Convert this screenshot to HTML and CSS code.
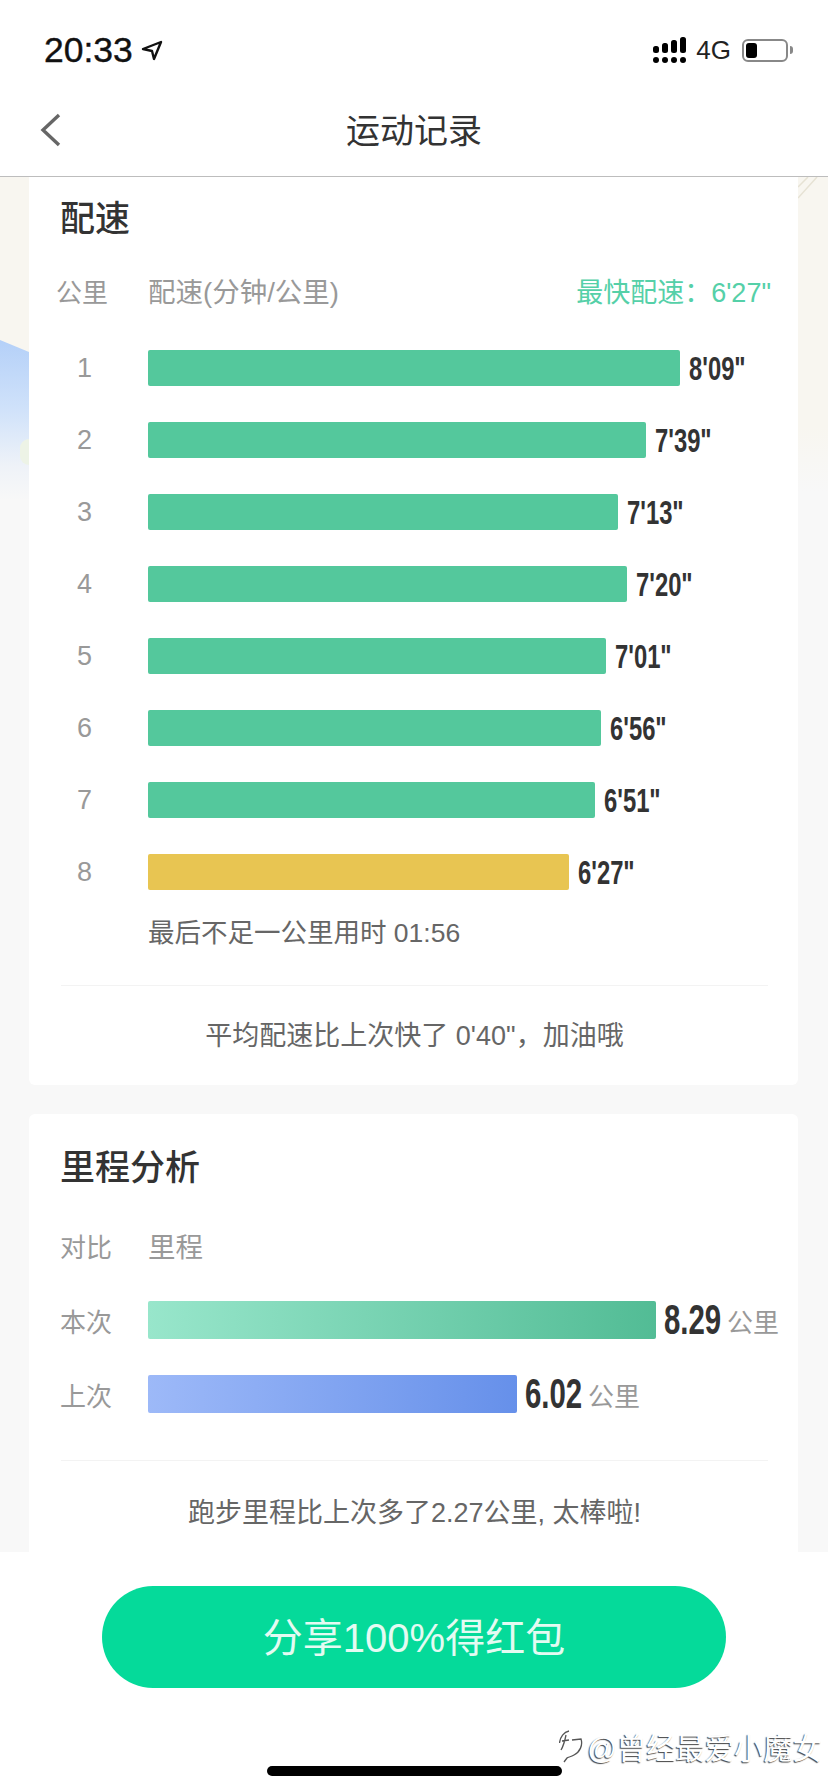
FILE: index.html
```html
<!DOCTYPE html>
<html lang="zh-CN">
<head>
    <meta charset="UTF-8">
    <meta name="viewport" content="width=device-width, initial-scale=1.0">
    <title>运动记录</title>
    <link rel="stylesheet" href="styles.css">
</head>
<body>

<div class="phone">
    <div class="status-bar">
        <div class="status-left">
            <span class="time">20:33</span>
            <svg class="locate" width="22" height="22" viewBox="0 0 22 22">
                <path d="M2 10 L20 3 L13 20 L11 12 Z" fill="none" stroke="#111" stroke-width="2.4" stroke-linejoin="round"/>
            </svg>
        </div>
        <div class="status-right">
            <svg class="signal" width="33" height="26" viewBox="0 0 33 26">
                <rect x="0" y="9" width="6" height="7" rx="2.5"/>
                <rect x="9" y="6" width="6" height="10" rx="2.5"/>
                <rect x="18" y="3" width="6" height="13" rx="2.5"/>
                <rect x="27" y="0" width="6" height="16" rx="2.5"/>
                <rect x="0" y="20" width="6" height="6" rx="3"/>
                <rect x="9" y="20" width="6" height="6" rx="3"/>
                <rect x="18" y="20" width="6" height="6" rx="3"/>
                <rect x="27" y="20" width="6" height="6" rx="3"/>
            </svg>
            <span class="network">4G</span>
            <div class="battery"><div class="battery-level"></div></div>
            <div class="battery-tip"></div>
        </div>
    </div>

    <div class="nav-bar">
        <svg class="back" width="22" height="34" viewBox="0 0 22 34">
            <path d="M19 2 L3 17 L19 32" fill="none" stroke="#666" stroke-width="3.4"/>
        </svg>
        <span class="nav-title">运动记录</span>
    </div>

    <div class="content">
        <!-- map artwork showing around the cards -->
        <div class="scene">
            <div class="scene-sky"></div>
            <div class="scene-hill"></div>
            <svg class="scene-lines" width="30" height="24" viewBox="0 0 30 24">
                <path d="M0 21 L19 0 M0 10 L10 0" stroke="#e6e2d4" stroke-width="1.5" fill="none"/>
            </svg>
        </div>

        <section class="card card-pace">
            <h2 class="card-title">配速</h2>
            <div class="table-head">
                <span class="col-label">公里</span>
                <span class="col-main">配速(分钟/公里)</span>
                <span class="fastest">最快配速：6'27"</span>
            </div>

            <div class="pace-row">
                <span class="km">1</span>
                <div class="bar" style="width: 532px"></div>
                <span class="pace">8'09"</span>
            </div>
            <div class="pace-row">
                <span class="km">2</span>
                <div class="bar" style="width: 498px"></div>
                <span class="pace">7'39"</span>
            </div>
            <div class="pace-row">
                <span class="km">3</span>
                <div class="bar" style="width: 470px"></div>
                <span class="pace">7'13"</span>
            </div>
            <div class="pace-row">
                <span class="km">4</span>
                <div class="bar" style="width: 479px"></div>
                <span class="pace">7'20"</span>
            </div>
            <div class="pace-row">
                <span class="km">5</span>
                <div class="bar" style="width: 458px"></div>
                <span class="pace">7'01"</span>
            </div>
            <div class="pace-row">
                <span class="km">6</span>
                <div class="bar" style="width: 453px"></div>
                <span class="pace">6'56"</span>
            </div>
            <div class="pace-row">
                <span class="km">7</span>
                <div class="bar" style="width: 447px"></div>
                <span class="pace">6'51"</span>
            </div>
            <div class="pace-row">
                <span class="km">8</span>
                <div class="bar bar-best" style="width: 421px"></div>
                <span class="pace">6'27"</span>
            </div>

            <p class="last-km">最后不足一公里用时 01:56</p>
            <p class="summary">平均配速比上次快了 0'40"，加油哦</p>
        </section>

        <section class="card card-distance">
            <h2 class="card-title">里程分析</h2>
            <div class="table-head table-head-distance">
                <span class="col-label">对比</span>
                <span class="col-main">里程</span>
            </div>

            <div class="distance-row">
                <span class="compare">本次</span>
                <div class="bar-wide bar-now" style="width: 508px"></div>
                <span class="distance">8.29</span>
                <span class="unit">公里</span>
            </div>
            <div class="distance-row">
                <span class="compare">上次</span>
                <div class="bar-wide bar-prev" style="width: 369px"></div>
                <span class="distance">6.02</span>
                <span class="unit">公里</span>
            </div>

            <p class="summary summary-distance">跑步里程比上次多了2.27公里, 太棒啦!</p>
        </section>
    </div>

    <div class="footer">
        <button class="share-btn">分享100%得红包</button>
        <div class="credit">
            <svg class="credit-mark" width="24" height="33" viewBox="0 0 24 33">
                <path d="M10 1 C5 2 1 7 0.5 13 M7 5 C6 10 5 15 2 20 M3 11 L10 10 M13 10 L22 9 C24 15 21 22 15 25 C12 27 9 27 8 28 L5 32" fill="none" stroke="#555" stroke-width="1.3"/>
            </svg>
            <span>@曾经最爱小魔女</span>
        </div>
        <div class="home-bar"></div>
    </div>
</div>

</body>
</html>
```

FILE: styles.css
```css
* {
    box-sizing: border-box;
}

body {
    margin: 0;
    padding: 0;
    background-color: #fff;
    font-family: "Liberation Sans", "Noto Sans CJK SC", sans-serif;
}

.phone {
    width: 828px;
    height: 1792px;
    display: flex;
    flex-direction: column;
    overflow: hidden;
}

/* status bar */
.status-bar {
    height: 80px;
    padding: 32px 35px 0 44px;
    display: flex;
    justify-content: space-between;
    align-items: flex-start;
}

.status-left {
    display: flex;
    align-items: center;
    gap: 8px;
}

.time {
    font-size: 35.5px;
    line-height: 36px;
    color: #111;
    -webkit-text-stroke: 0.4px #111;
}

.status-right {
    display: flex;
    align-items: center;
    height: 36px;
}

.signal {
    fill: #000;
    margin-right: 10px;
}

.network {
    font-size: 26px;
    color: #222;
    margin-right: 11px;
}

.battery {
    width: 46px;
    height: 23px;
    border: 2px solid #888;
    border-radius: 6px;
    padding: 2px;
}

.battery-level {
    width: 11px;
    height: 100%;
    background: #000;
    border-radius: 3px;
}

.battery-tip {
    width: 3px;
    height: 8px;
    margin-left: 2px;
    background: #888;
    border-radius: 0 3px 3px 0;
}

/* nav */
.nav-bar {
    height: 97px;
    border-bottom: 1px solid #bdbdbd;
    position: relative;
    display: flex;
    justify-content: center;
    align-items: center;
    background: #fff;
}

.back {
    position: absolute;
    left: 40px;
    top: 33px;
}

.nav-title {
    font-size: 34px;
    color: #333;
}

/* scrolling area */
.content {
    flex: 1;
    position: relative;
    overflow: hidden;
    background: #f8f8f8;
    padding: 0 30px 0 29px;
    display: flex;
    flex-direction: column;
    gap: 29px;
}

.scene {
    position: absolute;
    left: 0;
    right: 0;
    top: 0;
    height: 315px;
    background: linear-gradient(#f8f6f0 0, #f8f6f0 250px, #f8f8f8 315px);
}

.scene-sky {
    position: absolute;
    left: 0;
    top: 163px;
    width: 29px;
    height: 160px;
    background: linear-gradient(#b4d0f8 0, #d0e2fa 70px, #eef2f8 125px, #f8f8f8 160px);
    clip-path: polygon(0 0, 100% 12px, 100% 100%, 0 100%);
}

.scene-hill {
    position: absolute;
    left: 20px;
    top: 262px;
    width: 9px;
    height: 26px;
    background: #edf3e6;
    border-radius: 9px 0 0 9px;
}

.scene-lines {
    position: absolute;
    right: 0;
    top: 0;
}

.card {
    position: relative;
    background: #fff;
    border-radius: 0 0 6px 6px;
    padding: 0 30px 0 32px;
    flex-shrink: 0;
    white-space: nowrap;
}

.card-pace {
    height: 908px;
    padding-top: 18px;
}

.card-distance {
    border-radius: 6px 6px 0 0;
    height: 438px;
    padding-top: 30px;
}

.card-title {
    margin: 0 0 0 -1px;
    font-size: 35px;
    font-weight: 500;
    line-height: 48px;
    color: #333;
}

/* table headings */
.table-head {
    margin-top: 29px;
    height: 36px;
    display: flex;
    align-items: center;
    font-size: 27.5px;
    color: #999;
}

.table-head-distance {
    margin-top: 35px;
}

.col-label {
    width: 87px;
    flex: none;
    font-size: 26px;
    margin-left: -1px;
    margin-right: 1px;
}

.card-pace .col-label {
    margin-left: -5px;
    margin-right: 5px;
}

.fastest {
    margin-left: auto;
    margin-right: -3px;
    font-size: 27px;
    color: #55d0a8;
}

/* per kilometre bars */
.pace-row {
    display: flex;
    align-items: center;
    height: 36px;
    margin-top: 36px;
    font-size: 27px;
}

.table-head + .pace-row {
    margin-top: 42px;
}

.km {
    width: 87px;
    flex: none;
    padding-left: 16px;
    color: #999;
}

.bar {
    flex: none;
    height: 36px;
    background: #54c89c;
    border-radius: 2px;
}

.bar-best {
    background: #e8c552;
}

.pace,
.distance {
    display: inline-block;
    transform: scaleX(0.7);
    transform-origin: left center;
    font-weight: 700;
    color: #333;
}

.pace {
    margin-left: 9px;
    font-size: 34px;
}

.last-km {
    margin: 28px 0 0 87px;
    font-size: 26.5px;
    line-height: 30px;
    color: #666;
}

.summary {
    margin: 37px 0 0;
    padding-top: 33px;
    border-top: 1px solid #f3f3f3;
    text-align: center;
    font-size: 27px;
    line-height: 34px;
    color: #666;
}

/* distance comparison */
.distance-row {
    display: flex;
    align-items: center;
    height: 38px;
    margin-top: 36px;
}

.table-head + .distance-row {
    margin-top: 38px;
}

.compare {
    width: 87px;
    flex: none;
    font-size: 26px;
    color: #999;
    margin-left: -1px;
    margin-right: 1px;
}

.bar-wide {
    flex: none;
    height: 38px;
    border-radius: 2px;
}

.bar-now {
    background: linear-gradient(to right, #98e6cb, #52bc95);
}

.bar-prev {
    background: linear-gradient(to right, #9db9f8, #6690ea);
}

.distance {
    width: 63px;
    flex: none;
    margin-left: 8px;
    font-size: 42px;
    line-height: 38px;
}

.unit {
    font-size: 26px;
    color: #999;
}

.summary-distance {
    margin-top: 47px;
    padding-top: 35px;
}

/* bottom share area */
.footer {
    height: 240px;
    background: #fff;
    position: relative;
    flex-shrink: 0;
}

.share-btn {
    display: block;
    width: 624px;
    height: 102px;
    margin: 34px 0 0 102px;
    padding: 0 0 5px;
    border: none;
    border-radius: 51px;
    background: #05da9a;
    color: #e4fbf2;
    font-family: inherit;
    font-size: 40px;
}

.credit {
    position: absolute;
    right: 6px;
    top: 173px;
    display: flex;
    align-items: center;
    gap: 4px;
    font-size: 29.3px;
    color: #fff;
    text-shadow: -1px 1px 1px #444;
}

.home-bar {
    position: absolute;
    left: 267px;
    top: 214px;
    width: 295px;
    height: 10px;
    border-radius: 5px;
    background: #000;
}
```
